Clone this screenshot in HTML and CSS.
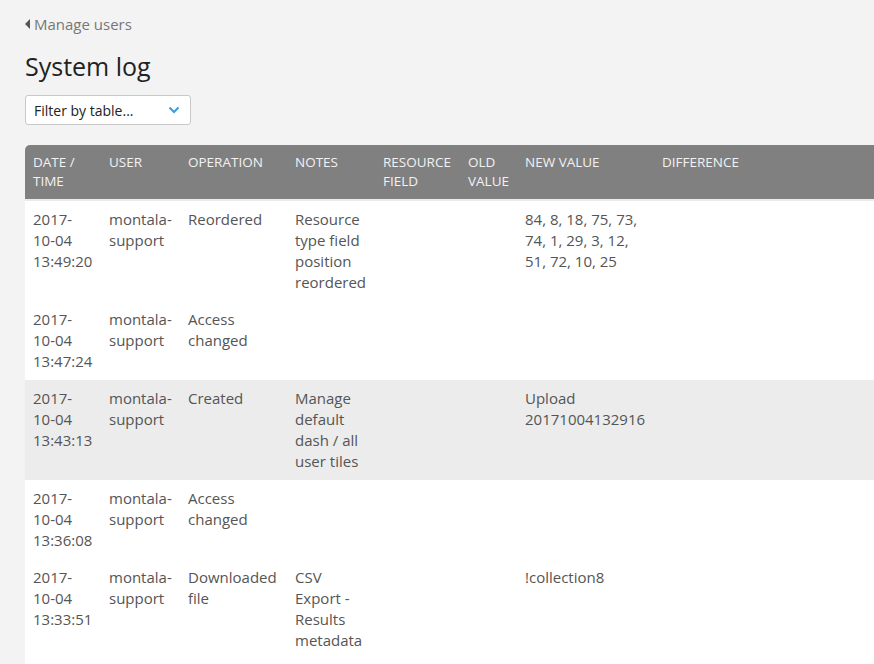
FILE: index.html
```html
<!DOCTYPE html>
<html lang="en">
<head>
  <meta charset="UTF-8" />
  <title>System log</title>
  <link rel="stylesheet" href="styles.css">
</head>
<body>
  <div class="page">
    <a class="back-link" href="#"><span class="back-arrow"></span>Manage users</a>
    <h1>System log</h1>
    <div class="filter">
      <span>Filter by table...</span>
      <svg width="12" height="8" viewBox="0 0 12 8"><path d="M1.5 1.5 L6 6 L10.5 1.5" fill="none" stroke="#3b9ae1" stroke-width="2"/></svg>
    </div>
    <div class="table-wrap">
      <table class="log">
        <thead>
          <tr>
            <th class="c-date">Date / time</th>
            <th class="c-user">User</th>
            <th class="c-op">Operation</th>
            <th class="c-notes">Notes</th>
            <th class="c-field">Resource field</th>
            <th class="c-old">Old value</th>
            <th class="c-new">New value</th>
            <th>Difference</th>
          </tr>
        </thead>
        <tbody>
          <tr>
            <td>2017-<br>10-04<br>13:49:20</td>
            <td>montala-<br>support</td>
            <td>Reordered</td>
            <td>Resource type field position reordered</td>
            <td></td>
            <td></td>
            <td>84, 8, 18, 75, 73, 74, 1, 29, 3, 12, 51, 72, 10, 25</td>
            <td></td>
          </tr>
          <tr>
            <td>2017-<br>10-04<br>13:47:24</td>
            <td>montala-<br>support</td>
            <td>Access changed</td>
            <td></td>
            <td></td>
            <td></td>
            <td></td>
            <td></td>
          </tr>
          <tr class="shade">
            <td>2017-<br>10-04<br>13:43:13</td>
            <td>montala-<br>support</td>
            <td>Created</td>
            <td>Manage default dash / all user tiles</td>
            <td></td>
            <td></td>
            <td>Upload 20171004132916</td>
            <td></td>
          </tr>
          <tr>
            <td>2017-<br>10-04<br>13:36:08</td>
            <td>montala-<br>support</td>
            <td>Access changed</td>
            <td></td>
            <td></td>
            <td></td>
            <td></td>
            <td></td>
          </tr>
          <tr>
            <td>2017-<br>10-04<br>13:33:51</td>
            <td>montala-<br>support</td>
            <td>Downloaded file</td>
            <td>CSV Export - Results metadata</td>
            <td></td>
            <td></td>
            <td>!collection8</td>
            <td></td>
          </tr>
        </tbody>
      </table>
    </div>
  </div>
</body>
</html>
```

FILE: styles.css
```css
html, body {
  margin: 0;
  background: #f3f3f3;
  overflow: hidden;
}
body {
  font-family: 'Open Sans', 'Liberation Sans', sans-serif;
  color: #555;
}
.page {
  padding: 12px 0 0 25px;
}
.back-link {
  display: inline-flex;
  align-items: center;
  font-size: 15px;
  color: #777;
  text-decoration: none;
  line-height: 20px;
}
.back-arrow {
  width: 0;
  height: 0;
  border-top: 5px solid transparent;
  border-bottom: 5px solid transparent;
  border-right: 5px solid #555;
  margin-right: 4px;
}
h1 {
  font-size: 25px;
  font-weight: normal;
  color: #222;
  margin: 15px 0 12px;
  line-height: 34px;
}
.filter {
  width: 166px;
  height: 30px;
  box-sizing: border-box;
  background: #fff;
  border: 1px solid #c8c8c8;
  border-radius: 3px;
  display: flex;
  align-items: center;
  justify-content: space-between;
  padding: 0 10px 0 8px;
  font-size: 14px;
  color: #222;
}
.table-wrap {
  margin-top: 20px;
  width: 900px;
  background: #fff;
  border-top-left-radius: 5px;
  padding-bottom: 10px;
}
.log {
  width: 100%;
  border-collapse: separate;
  border-spacing: 0;
  font-size: 15px;
}
.log th {
  background: #808080;
  color: #f2f2f2;
  font-weight: normal;
  font-size: 13.5px;
  text-transform: uppercase;
  text-align: left;
  vertical-align: top;
  line-height: 19px;
  padding: 8px 8px 8px;
  border-bottom: 2px solid #ebebeb;
}
.log th:first-child {
  border-top-left-radius: 5px;
}
.log td {
  background: #fff;
  vertical-align: top;
  line-height: 21px;
  padding: 8px;
}
.log tr.shade td {
  background: #ececec;
}
.c-date { width: 60px; }
.c-user { width: 63px; }
.c-op { width: 91px; }
.c-notes { width: 72px; }
.c-field { width: 69px; }
.c-old { width: 41px; }
.c-new { width: 121px; }
```
